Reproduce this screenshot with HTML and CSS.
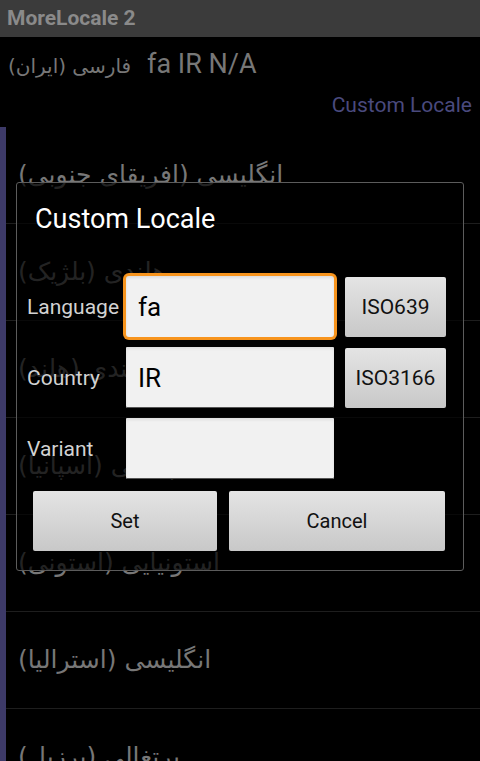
FILE: index.html
```html
<!DOCTYPE html>
<html lang="fa">
<head>
  <meta charset="UTF-8">
  <meta name="viewport" content="width=device-width, initial-scale=1.0">
  <title>MoreLocale 2</title>
  <link rel="stylesheet" href="styles.css">
</head>
<body>
  <div class="screen">
    <!-- Barra de título -->
    <div class="titlebar" dir="ltr">MoreLocale 2</div>

    <!-- Locale atual -->
    <div class="current" dir="ltr">
      <span class="fa-name" dir="rtl">فارسی (ایران)</span>
      <span class="code">fa IR N/A</span>
    </div>
    <div class="custom-link" dir="ltr">Custom Locale</div>

    <!-- Lista de locales -->
    <ul class="locales">
      <li><span dir="rtl">انگلیسی (افریقای جنوبی)</span></li>
      <li><span dir="rtl">هلندی (بلژیک)</span></li>
      <li><span dir="rtl">هلندی (هلند)</span></li>
      <li><span dir="rtl">اسپانیایی (اسپانیا)</span></li>
      <li><span dir="rtl">استونیایی (استونی)</span></li>
      <li><span dir="rtl">انگلیسی (استرالیا)</span></li>
      <li><span dir="rtl">پرتغالی (برزیل)</span></li>
    </ul>

    <!-- Diálogo -->
    <div class="dialog" dir="ltr">
      <h1>Custom Locale</h1>

      <div class="fields">
        <label for="language">Language</label>
        <input type="text" id="language" class="focused" value="fa">
        <button type="button" class="iso">ISO639</button>

        <label for="country">Country</label>
        <input type="text" id="country" value="IR">
        <button type="button" class="iso">ISO3166</button>

        <label for="variant">Variant</label>
        <input type="text" id="variant" value="">
        <span></span>
      </div>

      <div class="actions">
        <button type="button" class="action">Set</button>
        <button type="button" class="action">Cancel</button>
      </div>
    </div>
  </div>
</body>
</html>
```

FILE: styles.css
```css
/* Estilos gerais */
* {
  margin: 0;
  padding: 0;
  box-sizing: border-box;
}

body {
  background-color: #000;
  font-family: Roboto, "DejaVu Sans", sans-serif;
}

.screen {
  position: relative;
  width: 480px;
  height: 761px;
  overflow: hidden;
  background-color: #000;
}

/* Barra de título */
.titlebar {
  height: 37px;
  line-height: 37px;
  padding-left: 7px;
  background-color: #3b3b3b;
  color: #8a8a8a;
  font-size: 21px;
  font-weight: bold;
}

/* Locale atual */
.current {
  height: 54px;
  line-height: 54px;
  padding-left: 8px;
  color: #777;
  white-space: nowrap;
}

.current .fa-name {
  font-family: "DejaVu Sans", sans-serif;
  font-size: 20px;
  unicode-bidi: isolate;
  margin-right: 12px;
}

.current .code {
  font-size: 27px;
}

.custom-link {
  height: 36px;
  line-height: 28px;
  padding-right: 8px;
  text-align: right;
  color: #4a4a7e;
  font-size: 21px;
}

/* Lista */
.locales {
  list-style: none;
  border-left: 6px solid #3d3a68;
  height: 640px;
}

.locales li {
  height: 97px;
  line-height: 96px;
  padding-left: 12px;
  border-bottom: 1px solid #1e1e1e;
  color: #777;
  font-family: "DejaVu Sans", sans-serif;
  font-size: 25px;
  white-space: nowrap;
}

.locales li span {
  unicode-bidi: isolate;
}

/* Diálogo */
.dialog {
  position: absolute;
  left: 16px;
  top: 182px;
  width: 448px;
  height: 389px;
  border: 1px solid #5c5c5c;
  border-radius: 3px;
  background-color: rgba(0, 0, 0, 0.7);
}

.dialog h1 {
  padding: 18px 0 0 18px;
  line-height: 36px;
  margin-bottom: 39px;
  color: #fff;
  font-size: 27px;
  font-weight: normal;
}

.fields {
  display: grid;
  grid-template-columns: 88px 208px 101px;
  grid-auto-rows: 61px;
  column-gap: 11px;
  row-gap: 10px;
  padding-left: 10px;
  align-items: center;
}

.fields label {
  color: #d2d2d2;
  font-size: 21px;
  white-space: nowrap;
}

.fields input {
  height: 61px;
  width: 208px;
  padding-left: 12px;
  border: none;
  border-radius: 1px;
  background-color: #f1f1f1;
  box-shadow: inset 0 2px 3px rgba(0, 0, 0, 0.08), inset 0 -1px 0 #555;
  color: #000;
  font-family: Roboto, sans-serif;
  font-size: 26px;
  outline: none;
}

.fields input.focused {
  box-shadow: 0 0 0 3px #f7941d, inset 0 2px 3px rgba(0, 0, 0, 0.08);
  border-radius: 3px;
}

.iso {
  height: 60px;
  border: none;
  border-radius: 2px;
  background: linear-gradient(#e4e4e4, #c8c8c8);
  color: #111;
  font-family: Roboto, sans-serif;
  font-size: 21px;
}

/* Botões */
.actions {
  display: grid;
  grid-template-columns: 184px 216px;
  column-gap: 12px;
  padding-left: 16px;
  margin-top: 12px;
}

.action {
  height: 60px;
  border: none;
  border-radius: 2px;
  background: linear-gradient(#e4e4e4, #c8c8c8);
  color: #111;
  font-family: Roboto, sans-serif;
  font-size: 20px;
}
```
